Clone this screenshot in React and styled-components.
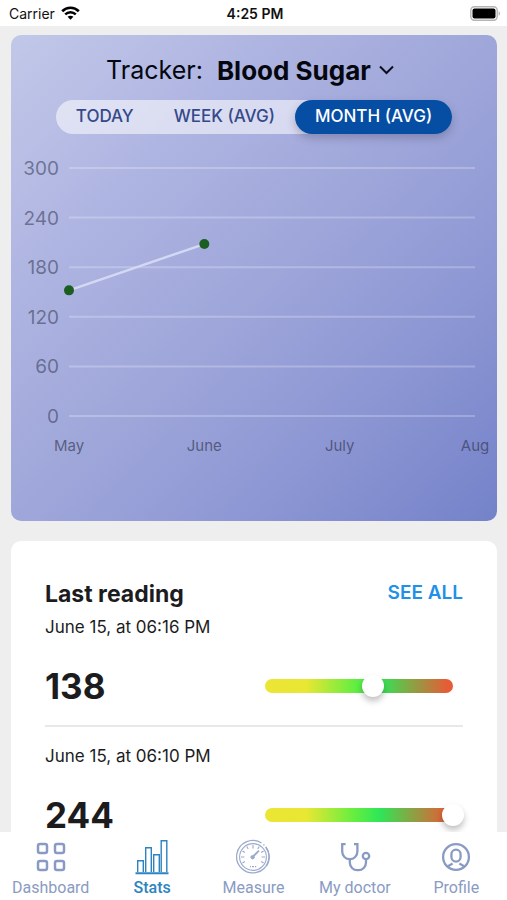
import React, { useState } from "react";
import styled, { createGlobalStyle } from "styled-components";

const periods = ["TODAY", "WEEK (AVG)", "MONTH (AVG)"];
const months = ["May", "June", "July", "Aug"];
const levels = [300, 240, 180, 120, 60, 0];
const averages = [152, 208];

const readings = [
  { id: 1, date: "June 15, at 06:16 PM", value: 138 },
  { id: 2, date: "June 15, at 06:10 PM", value: 244 },
];

// chart coordinates
const LEFT = 58;
const RIGHT = 464;
const TOP = 34;
const BOTTOM = 282;
const xOf = (i) => LEFT + (i * (RIGHT - LEFT)) / (months.length - 1);
const yOf = (v) => BOTTOM - (v * (BOTTOM - TOP)) / 300;

const Chart = () => (
  <ChartSvg viewBox="0 0 486 387" role="img" aria-label="Blood Sugar by month">
    {levels.map((level) => (
      <g key={level}>
        <line
          x1={LEFT}
          x2={RIGHT}
          y1={yOf(level)}
          y2={yOf(level)}
          stroke="#fff"
          strokeOpacity="0.24"
          strokeWidth="2"
        />
        <LevelText x={LEFT - 10} y={yOf(level) + 7} textAnchor="end">
          {level}
        </LevelText>
      </g>
    ))}
    {months.map((month, i) => (
      <MonthText key={month} x={xOf(i)} y={BOTTOM + 35} textAnchor="middle">
        {month}
      </MonthText>
    ))}
    <polyline
      points={averages.map((v, i) => `${xOf(i)},${yOf(v)}`).join(" ")}
      fill="none"
      stroke="#d3d9f3"
      strokeWidth="2.4"
    />
    {averages.map((v, i) => (
      <circle key={v} cx={xOf(i)} cy={yOf(v)} r="5" fill="#1b5e20" />
    ))}
  </ChartSvg>
);

const WifiIcon = () => (
  <svg width="19" height="14" viewBox="0 0 19 14" fill="none" stroke="#000">
    <path d="M1.2 5.2C5.8 0.6 13.2 0.6 17.8 5.2" strokeWidth="2.7" />
    <path d="M4.2 8.3C7.2 5.4 11.8 5.4 14.8 8.3" strokeWidth="2.5" />
    <path d="M9.5 13.8L6.6 10.8C8.2 9.3 10.8 9.3 12.4 10.8Z" fill="#000" stroke="none" />
  </svg>
);

const BatteryIcon = () => (
  <svg width="31" height="15" viewBox="0 0 31 15">
    <rect x="0.8" y="0.8" width="26.4" height="13.4" rx="3.6" fill="#fff" stroke="#b4b4b4" strokeWidth="1.4" />
    <rect x="2.5" y="2.5" width="23" height="10" rx="2" fill="#000" />
    <path d="M28.6 5.2C30.4 5.8 30.4 9.2 28.6 9.8Z" fill="#b4b4b4" />
  </svg>
);

const ChevronIcon = () => (
  <svg width="15" height="10" viewBox="0 0 15 10" fill="none" stroke="#0b0e1c" strokeWidth="2">
    <path d="M1 1.5L7.5 8L14 1.5" />
  </svg>
);

const DashboardIcon = () => (
  <svg width="34" height="36" viewBox="0 0 34 36" fill="none" stroke="currentColor" strokeWidth="2.5">
    <rect x="4" y="5" width="9" height="9" rx="2" />
    <rect x="21" y="5" width="9" height="9" rx="2" />
    <rect x="4" y="22" width="9" height="9" rx="2" />
    <rect x="21" y="22" width="9" height="9" rx="2" />
  </svg>
);

const StatsIcon = () => (
  <svg width="34" height="36" viewBox="0 0 34 36" fill="none" stroke="currentColor" strokeWidth="1.4">
    <path d="M2.7 33V21.7H8.3V33" />
    <path d="M10.7 33V8.7H16.3V33" />
    <path d="M18.7 33V15.7H24.3V33" />
    <path d="M26.2 33V1.7H31.8V33" />
    <path d="M0.5 34.2H33.5" strokeWidth="2" />
  </svg>
);

const MeasureIcon = () => (
  <svg width="34" height="36" viewBox="0 0 34 36" fill="none" stroke="currentColor" opacity="0.85">
    <path d="M25.5 4A16.2 16.2 0 1 0 29.8 8" strokeWidth="1.3" />
    <path d="M29.8 8A16.2 16.2 0 0 1 30.6 26.8" strokeWidth="1.3" />
    <path d="M27.4 5.4L28.4 6.3" strokeWidth="1.3" />
    <circle cx="17" cy="18" r="13.4" strokeWidth="1.1" />
    <path
      d="M17 6V9.4M10.8 7.4L12.2 9.9M6.4 12L8.9 13.4M5 18H8.4M6.4 24L8.9 22.6M23.2 7.4L21.8 9.9M27.6 12L25.1 13.4M29 18H25.6M27.6 24L25.1 22.6"
      strokeWidth="1.1"
    />
    <path d="M17.6 17L23 11.6" strokeWidth="1.8" />
    <circle cx="16.6" cy="18.2" r="1.7" fill="currentColor" />
    <path d="M14 27.6H15M16 27.6H18M19 27.6H20.2" strokeWidth="1.2" />
  </svg>
);

const DoctorIcon = () => (
  <svg width="34" height="36" viewBox="0 0 34 36" fill="none" stroke="currentColor" strokeWidth="2.3">
    <path d="M7.6 5.2H4.2V12.6A7.6 7.6 0 0 0 19.4 12.6V5.2H16" />
    <path d="M11.8 20.2V23.6A7.6 7.6 0 0 0 19.4 31.2H20.4A7.6 7.6 0 0 0 28 23.6V20.4" />
    <circle cx="28" cy="17" r="3.2" />
  </svg>
);

const ProfileIcon = () => (
  <svg width="34" height="36" viewBox="0 0 34 36" fill="none" stroke="currentColor" strokeWidth="2.3">
    <circle cx="17" cy="18" r="12.9" />
    <rect x="12.4" y="10.6" width="9.2" height="12" rx="4.6" />
    <path d="M8.6 27.4L13.6 24.6M25.4 27.4L20.4 24.6" />
  </svg>
);

const tabs = [
  { name: "Dashboard", icon: <DashboardIcon /> },
  { name: "Stats", icon: <StatsIcon />, active: true },
  { name: "Measure", icon: <MeasureIcon /> },
  { name: "My doctor", icon: <DoctorIcon /> },
  { name: "Profile", icon: <ProfileIcon /> },
];

const App = () => {
  const [tracker, setTracker] = useState("Blood Sugar");
  const [period, setPeriod] = useState("MONTH (AVG)");

  return (
    <Screen>
      <GlobalStyle />
      <StatusBar>
        <Carrier>
          Carrier <WifiIcon />
        </Carrier>
        <Clock>4:25 PM</Clock>
        <Battery>
          <BatteryIcon />
        </Battery>
      </StatusBar>

      <Content>
        <TrackerCard>
          <Title>
            <TitleLabel htmlFor="tracker">Tracker:</TitleLabel>
            <TrackerSelect
              id="tracker"
              value={tracker}
              onChange={(e) => setTracker(e.target.value)}
            >
              <option>Blood Sugar</option>
            </TrackerSelect>
            <ChevronIcon />
          </Title>
          <Periods>
            {periods.map((name) => (
              <PeriodButton
                key={name}
                type="button"
                $active={name === period}
                aria-pressed={name === period}
                onClick={() => setPeriod(name)}
              >
                {name}
              </PeriodButton>
            ))}
          </Periods>
          <Chart />
        </TrackerCard>

        <ReadingsCard>
          <ReadingsHeader>
            <Heading>Last reading</Heading>
            <SeeAll href="#all">SEE ALL</SeeAll>
          </ReadingsHeader>
          {readings.map((reading) => (
            <Reading key={reading.id}>
              <ReadingDate>{reading.date}</ReadingDate>
              <ReadingRow>
                <Value>{reading.value}</Value>
                <Scale>
                  <ScaleInput
                    type="range"
                    min="0"
                    max="240"
                    value={Math.min(reading.value, 240)}
                    aria-label={reading.date}
                    readOnly
                  />
                </Scale>
              </ReadingRow>
            </Reading>
          ))}
        </ReadingsCard>
      </Content>

      <TabBar>
        {tabs.map((tab) => (
          <Tab key={tab.name} href="#" $active={tab.active}>
            {tab.icon}
            {tab.name}
          </Tab>
        ))}
      </TabBar>
    </Screen>
  );
};

export default App;

const GlobalStyle = createGlobalStyle`
  * {
    box-sizing: border-box;
  }
  body {
    margin: 0;
    background: #eeeeee;
    font-family: "Inter", "Liberation Sans", sans-serif;
  }
`;
const Screen = styled.div`
  display: flex;
  flex-direction: column;
  height: 100vh;
  background: #eeeeee;
`;
const StatusBar = styled.header`
  display: grid;
  grid-template-columns: 1fr auto 1fr;
  align-items: center;
  flex-shrink: 0;
  height: 26px;
  padding: 0 6px 0 9px;
  background: #fff;
  color: #111;
  font-size: 14px;
`;
const Carrier = styled.span`
  display: flex;
  align-items: center;
  gap: 6px;
`;
const Clock = styled.span`
  font-weight: 600;
`;
const Battery = styled.span`
  display: flex;
  justify-content: flex-end;
`;
const Content = styled.main`
  display: flex;
  flex-direction: column;
  flex: 1;
  gap: 20px;
  min-height: 0;
  padding: 9px 10px 0 11px;
  overflow: hidden;
`;
const TrackerCard = styled.section`
  flex-shrink: 0;
  border-radius: 10px;
  background: linear-gradient(135deg, #c2c8e8 0%, #b0b6e2 25%, #9fa7da 50%, #8c96d3 75%, #7482c9 100%);
  overflow: hidden;
`;
const Title = styled.div`
  display: flex;
  align-items: center;
  justify-content: center;
  height: 65px;
  padding: 5px 8px 0 0;
  gap: 8px;
  color: #05070f;
  font-size: 26px;
`;
const TitleLabel = styled.label`
  margin-right: 6px;
  font-size: 25px;
`;
const TrackerSelect = styled.select`
  appearance: none;
  field-sizing: content;
  padding: 0;
  border: 0;
  background: none;
  color: inherit;
  font: inherit;
  font-weight: 700;
`;
const Periods = styled.div`
  display: flex;
  width: fit-content;
  margin: 0 auto;
  border-radius: 17px;
  background: rgba(255, 255, 255, 0.55);
`;
const PeriodButton = styled.button`
  height: 34px;
  padding: 0 20px 3px;
  border: 0;
  border-radius: 17px;
  background: ${(props) => (props.$active ? "#064ea4" : "transparent")};
  box-shadow: ${(props) => (props.$active ? "0 4px 8px rgba(60, 60, 80, 0.3)" : "none")};
  color: ${(props) => (props.$active ? "#fff" : "#34498a")};
  font-family: inherit;
  font-size: 17px;
  font-weight: 500;
`;
const ChartSvg = styled.svg`
  display: block;
  width: 100%;
`;
const LevelText = styled.text`
  fill: #30344f;
  fill-opacity: 0.55;
  font-size: 19px;
`;
const MonthText = styled.text`
  fill: #30344f;
  fill-opacity: 0.65;
  font-size: 15px;
`;
const ReadingsCard = styled.section`
  flex-shrink: 0;
  padding: 38px 34px 0;
  border-radius: 10px;
  background: #fff;
  color: #1c1c1e;
`;
const ReadingsHeader = styled.div`
  display: flex;
  justify-content: space-between;
`;
const Heading = styled.h2`
  margin: 0;
  font-size: 23px;
  font-weight: 700;
  line-height: 30px;
`;
const SeeAll = styled.a`
  color: #2191e8;
  font-size: 19px;
  font-weight: 600;
  line-height: 28px;
  text-decoration: none;
`;
const Reading = styled.article`
  padding-bottom: 17px;

  & + & {
    padding-top: 11px;
    border-top: 2px solid #e8e8ea;
  }
`;
const ReadingDate = styled.div`
  padding-top: 6px;
  font-size: 17px;
  line-height: 24px;
`;
const ReadingRow = styled.div`
  display: flex;
  align-items: center;
  justify-content: space-between;
  padding: 25px 10px 0 0;
`;
const Value = styled.strong`
  font-size: 35px;
  font-weight: 700;
  line-height: 44px;
`;
const Scale = styled.div`
  display: flex;
  width: 46%;
  height: 14px;
  align-items: center;
  border-radius: 7px;
  background: linear-gradient(90deg, #ece533 0%, #e8e733 22%, #62ee40 48%, #2ee658 61%, #7fab45 76%, #e65c36 97%);
`;
const ScaleInput = styled.input`
  flex: 1;
  appearance: none;
  min-width: 0;
  height: 22px;
  margin: 0 -11px;
  background: transparent;

  &::-webkit-slider-thumb {
    appearance: none;
    width: 22px;
    height: 22px;
    border-radius: 50%;
    background: #fff;
    box-shadow: 0 4px 6px rgba(0, 0, 0, 0.25);
  }
`;
const TabBar = styled.nav`
  display: grid;
  grid-template-columns: repeat(5, 1fr);
  flex-shrink: 0;
  height: 68px;
  background: #fff;
`;
const Tab = styled.a`
  display: flex;
  flex-direction: column;
  align-items: center;
  gap: 3px;
  padding-top: 7px;
  color: ${(props) => (props.$active ? "#2c84c0" : "#8a9bc3")};
  font-family: "Roboto", sans-serif;
  font-size: 16px;
  font-weight: ${(props) => (props.$active ? 500 : 400)};
  line-height: 20px;
  text-decoration: none;
`;
